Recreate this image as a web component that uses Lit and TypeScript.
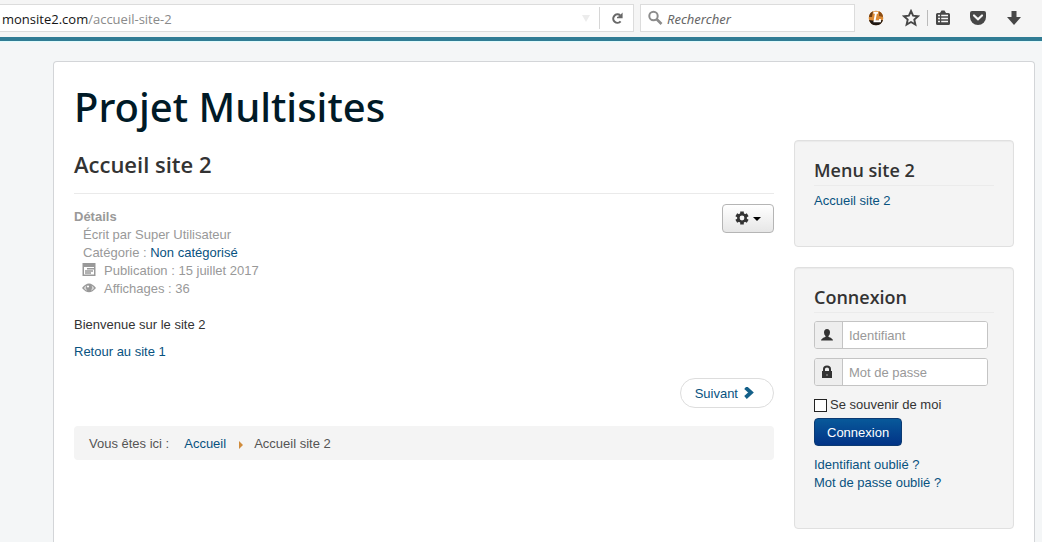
import { LitElement, html, css } from "lit";
import { customElement } from "lit/decorators.js";

@customElement("browser-bar")
class BrowserBar extends LitElement {
  static styles = css`
    :host {
      display: block;
      background: #f5f5f5;
      border-bottom: 4px solid #317c94;
      box-shadow: 0 1px 0 #dffcfd;
    }
    .bar {
      display: flex;
      height: 37px;
      box-sizing: border-box;
      padding: 4px 13px 5px 0;
      gap: 6px;
      font: 13px "Open Sans", "Noto Sans", sans-serif;
    }
    .address, .search {
      display: flex;
      align-items: center;
      background: #fff;
      border: 1px solid #dcdcdc;
      box-sizing: border-box;
    }
    .address { flex: 1; border-left: 0; }
    .url { flex: 1; padding: 1px 0 0 2px; color: #8a8a8a; white-space: nowrap; }
    .domain { color: #151515; }
    .drop {
      border: 4px solid transparent;
      border-top: 7px solid #ececec;
      border-bottom: 0;
      margin-right: 9px;
    }
    .tool {
      display: flex;
      align-items: center;
      justify-content: center;
      border: 0;
      padding: 0;
      background: none;
    }
    .reload { width: 34px; height: 22px; border-left: 1px solid #d6d6d6; }
    .search { width: 215px; padding-left: 6px; gap: 4px; }
    .field {
      flex: 1;
      min-width: 0;
      border: 0;
      padding: 2px 0 0;
      background: none;
      font: italic 13px "Noto Sans", "Open Sans", sans-serif;
      outline: 0;
    }
    .field::placeholder { color: #666; opacity: 1; }
    .tools { display: flex; align-items: center; }
    .tools .tool { width: 30px; }
    .tools .star { width: 36px; padding-left: 4px; }
    .tools .list { width: 30px; height: 16px; border-left: 1px solid #bbb; }
    .tools .pocket { width: 42px; }
    .tools .down { width: 30px; }
  `;
  render() {
    return html`
      <div class="bar">
        <div class="address">
          <span class="url"><span class="domain">monsite2.com</span>/accueil-site-2</span>
          <span class="drop"></span>
          <button class="tool reload" aria-label="Actualiser">
            <svg width="12" height="13" viewBox="0 0 12 13">
              <path d="M9.2 3.4A4.2 4.2 0 1 0 9.6 9.4" fill="none" stroke="#686868" stroke-width="2.1" />
              <path d="M11.6 .6V6.3H6V5L8.4 4L10.4 1.8Z" fill="#686868" />
            </svg>
          </button>
        </div>
        <div class="search">
          <svg width="16" height="16" viewBox="0 0 16 16" fill="none" stroke="#8c8c8c">
            <circle cx="6.5" cy="6" r="4.2" stroke-width="2" />
            <path d="M9.5 9L14.5 14" stroke-width="2.6" />
          </svg>
          <input class="field" type="text" aria-label="Rechercher" placeholder="Rechercher" />
        </div>
        <div class="tools">
          <button class="tool" aria-label="Extension">
            <svg width="16" height="16" viewBox="0 0 16 16">
              <circle cx="8" cy="8" r="7.3" fill="#dc8b35" />
              <path d="M1 10Q8 11 15 10A7.3 7.3 0 0 1 1 10Z" fill="#1f1713" />
              <path d="M1 7A7 7 0 0 1 5 1.3L4 7Z" fill="#6b3c12" />
              <path d="M11 1.3A7 7 0 0 1 15 7L11 6Z" fill="#8a4d16" />
              <path d="M5.5 2.8H10M8 2.8L6.5 11.2H12V9" fill="none" stroke="#fff" stroke-width="1.9" />
            </svg>
          </button>
          <button class="tool star" aria-label="Marquer cette page">
            <svg width="18" height="18" viewBox="0 0 18 18">
              <path d="M9 2L11.1 6.7L16 7.2L12.3 10.6L13.4 15.6L9 13L4.6 15.6L5.7 10.6L2 7.2L6.9 6.7Z" fill="none" stroke="#474747" stroke-width="1.9" />
            </svg>
          </button>
          <button class="tool list" aria-label="Marque-pages">
            <svg width="16" height="16" viewBox="0 0 16 16">
              <path d="M5 3L6.5 .5H9.5L11 3H13.5Q15 3 15 4.5V13.5Q15 15 13.5 15H2.5Q1 15 1 13.5V4.5Q1 3 2.5 3Z" fill="#474747" />
              <path d="M3 5.5H5M6.2 5.5H13M3 8.5H5M6.2 8.5H13M3 11.5H5M6.2 11.5H13" stroke="#f5f5f5" stroke-width="1.6" />
            </svg>
          </button>
          <button class="tool pocket" aria-label="Pocket">
            <svg width="16" height="16" viewBox="0 0 16 16">
              <path d="M2 1H14Q16 1 16 3V7A8 8 0 0 1 0 7V3Q0 1 2 1Z" fill="#474747" />
              <path d="M4 5.5L8 9.3L12 5.5" fill="none" stroke="#f5f5f5" stroke-width="2.2" stroke-linecap="round" />
            </svg>
          </button>
          <button class="tool down" aria-label="Téléchargements">
            <svg width="16" height="16" viewBox="0 0 16 16">
              <path d="M5.5 1H10.5V7H15L8 15L1 7H5.5Z" fill="#474747" />
            </svg>
          </button>
        </div>
      </div>
    `;
  }
}

@customElement("app-root")
class AppRoot extends LitElement {
  static styles = css`
    :host {
      display: flex;
      flex-direction: column;
      height: 100vh;
      overflow: hidden;
      background: #f4f6f7;
      color: #333;
      font: 13px/18px "Liberation Sans", Arial, sans-serif;
    }
    browser-bar { flex: none; }
    .page {
      flex: 1 0 auto;
      margin: 20px 7px 0 53px;
      padding: 20px;
      background: #fff;
      border: 1px solid #d3d5d8;
      border-bottom: 0;
      border-radius: 4px 4px 0 0;
    }
    h1, h2, h3 { margin: 0; font-family: "Open Sans", "Noto Sans", sans-serif; }
    h1 {
      margin-bottom: 8px;
      font-family: "Noto Sans", "Open Sans", sans-serif;
      font-size: 40px;
      line-height: 50px;
      font-weight: 500;
      color: #001a27;
    }
    a { color: #08527f; text-decoration: none; }
    .columns { display: grid; grid-template-columns: 1fr 220px; gap: 20px; }
    .heading { padding: 9px 0 14px; border-bottom: 1px solid #eaeaea; }
    h2 { font-size: 22px; line-height: 30px; font-weight: 600; }
    .info { display: flex; justify-content: space-between; align-items: flex-start; padding: 10px 0 18px; }
    dl { margin: 4px 0 0; color: #999; }
    dt { font-weight: 700; }
    dd { margin: 0 0 0 8px; padding-left: 1px; }
    .row { display: flex; gap: 8px; padding: 0; }
    p { margin: 0 0 9px; }
    .gear {
      display: flex;
      align-items: center;
      justify-content: center;
      gap: 4px;
      width: 52px;
      height: 29px;
      padding: 0 0 2px;
      border: 1px solid #b5b5b5;
      border-radius: 4px;
      background: linear-gradient(#fff, #e6e6e6);
    }
    .caret { margin-top: 2px; border: 4px solid transparent; border-top-color: #000; border-bottom: 0; }
    .pager { display: flex; justify-content: flex-end; margin: 17px 0 18px; }
    .next {
      display: flex;
      align-items: center;
      gap: 5px;
      height: 26px;
      padding: 2px 18px 0 14px;
      border: 1px solid #ddd;
      border-radius: 15px;
    }
    .crumbs {
      display: flex;
      align-items: center;
      padding: 9px 15px 7px;
      background: #f4f4f4;
      border-radius: 4px;
      color: #555;
    }
    .arrow { margin: 2px 11px 0 13px; border: 4px solid transparent; border-left-color: #d08c3c; border-right: 0; }
    .crumbs .home { margin-left: 15px; }
    .side { display: flex; flex-direction: column; gap: 20px; }
    .well {
      padding: 19px 19px 36px;
      border: 1px solid #e0e0e0;
      border-radius: 4px;
      background: #f4f4f4;
      box-shadow: inset 0 1px 1px #eaeaea;
    }
    h3 { margin-bottom: 6px; padding-bottom: 4px; border-bottom: 1px solid #ebebeb; font-size: 18px; line-height: 21px; font-weight: 600; }
    .links { display: flex; flex-direction: column; }
    .group { display: flex; width: 174px; height: 28px; margin: 9px 0; box-sizing: border-box; border: 1px solid #c4c4c4; border-radius: 3px; background: #fff; overflow: hidden; }
    .first { margin-top: 8px; }
    .icon { display: flex; align-items: center; justify-content: center; width: 28px; padding-right: 4px; box-sizing: border-box; background: #eee; border-right: 1px solid #c4c4c4; }
    .field { flex: 1; min-width: 0; border: 0; padding: 2px 6px 0; font: inherit; background: #fff; outline: 0; }
    .field::placeholder { color: #999; opacity: 1; }
    .remember { display: flex; align-items: center; gap: 3px; margin-top: 10px; }
    .check { appearance: none; width: 13px; height: 13px; margin: 0; border: 1px solid #222; background: #fff; }
    .submit {
      height: 28px;
      margin: 4px 0 10px;
      padding: 2px 12px 0;
      border: 1px solid #0b3a72;
      border-radius: 4px;
      background: linear-gradient(#08599a, #023386);
      color: #fff;
      font: inherit;
    }
  `;
  render() {
    return html`
      <browser-bar></browser-bar>
      <div class="page">
        <h1>Projet Multisites</h1>
        <div class="columns">
          <main>
            <div class="heading"><h2>Accueil site 2</h2></div>
            <div class="info">
              <dl>
                <dt>Détails</dt>
                <dd>Écrit par Super Utilisateur</dd>
                <dd>Catégorie : <a href="#">Non catégorisé</a></dd>
                <dd class="row">
                  <svg width="14" height="15" viewBox="0 0 14 15">
                    <path d="M.5 1H13.5V14H.5Z" fill="#999" />
                    <path d="M2 5H12V12.5H2Z" fill="#fff" />
                    <path d="M5 6.8H12M3 9H11M3 11.1H9" stroke="#999" stroke-width="1.5" />
                  </svg>
                  Publication : 15 juillet 2017
                </dd>
                <dd class="row">
                  <svg width="14" height="15" viewBox="0 0 14 15">
                    <path d="M0 8Q7 -1 14 8Q7 16.5 0 8Z" fill="#999" />
                    <path d="M1.8 8Q3 6.2 4.3 5.5Q3.2 8.5 5 10.8Q3 10 1.8 8ZM12.2 8Q11 6.2 9.7 5.5Q10.8 8.5 9 10.8Q11 10 12.2 8Z" fill="#fff" opacity=".6" />
                    <circle cx="6" cy="6.5" r="1.1" fill="#fff" />
                  </svg>
                  Affichages : 36
                </dd>
              </dl>
              <button class="gear" aria-label="Outils">
                <svg width="14" height="14" viewBox="0 0 14 14">
                  <path d="M7 .5V13.5M1.3 3.7L12.7 10.3M1.3 10.3L12.7 3.7" stroke="#333" stroke-width="3.6" />
                  <circle cx="7" cy="7" r="4.9" fill="#333" />
                  <circle cx="7" cy="7" r="2.4" fill="#f4f4f4" />
                </svg>
                <span class="caret"></span>
              </button>
            </div>
            <p>Bienvenue sur le site 2</p>
            <p><a href="#">Retour au site 1</a></p>
            <nav class="pager">
              <a class="next" href="#">Suivant
                <svg width="12" height="14" viewBox="0 0 12 14">
                  <path d="M2.5 .5L8 5.5L2.5 10.5" fill="none" stroke="#146089" stroke-width="3.8" />
                </svg>
              </a>
            </nav>
            <nav class="crumbs">
              <span>Vous êtes ici :</span>
              <a class="home" href="#">Accueil</a>
              <span class="arrow"></span>
              <span>Accueil site 2</span>
            </nav>
          </main>
          <aside class="side">
            <section class="well">
              <h3>Menu site 2</h3>
              <nav class="links"><a href="#">Accueil site 2</a></nav>
            </section>
            <section class="well">
              <h3>Connexion</h3>
              <form>
                <div class="group first">
                  <label class="icon" for="user" aria-label="Identifiant">
                    <svg width="12" height="12" viewBox="0 0 12 12" fill="#333">
                      <path d="M6 0Q9 0 9 3.5Q9 5.5 7.5 7V8Q11.5 9 12 11.5H0Q.5 9 4.5 8V7Q3 5.5 3 3.5Q3 0 6 0Z" />
                    </svg>
                  </label>
                  <input class="field" id="user" type="text" placeholder="Identifiant" />
                </div>
                <div class="group">
                  <label class="icon" for="pass" aria-label="Mot de passe">
                    <svg width="12" height="14" viewBox="0 0 12 14">
                      <path d="M3 7V4Q3 1.5 6 1.5Q9 1.5 9 4V7" fill="none" stroke="#333" stroke-width="2" />
                      <path d="M1 6H11V13H1Z" fill="#333" />
                      <path d="M6 9V11" stroke="#aaa" stroke-width="1" />
                    </svg>
                  </label>
                  <input class="field" id="pass" type="password" placeholder="Mot de passe" />
                </div>
                <label class="remember"><input class="check" type="checkbox" />Se souvenir de moi</label>
                <button class="submit" type="button">Connexion</button>
                <div class="links">
                  <a href="#">Identifiant oublié ?</a>
                  <a href="#">Mot de passe oublié ?</a>
                </div>
              </form>
            </section>
          </aside>
        </div>
      </div>
    `;
  }
}
